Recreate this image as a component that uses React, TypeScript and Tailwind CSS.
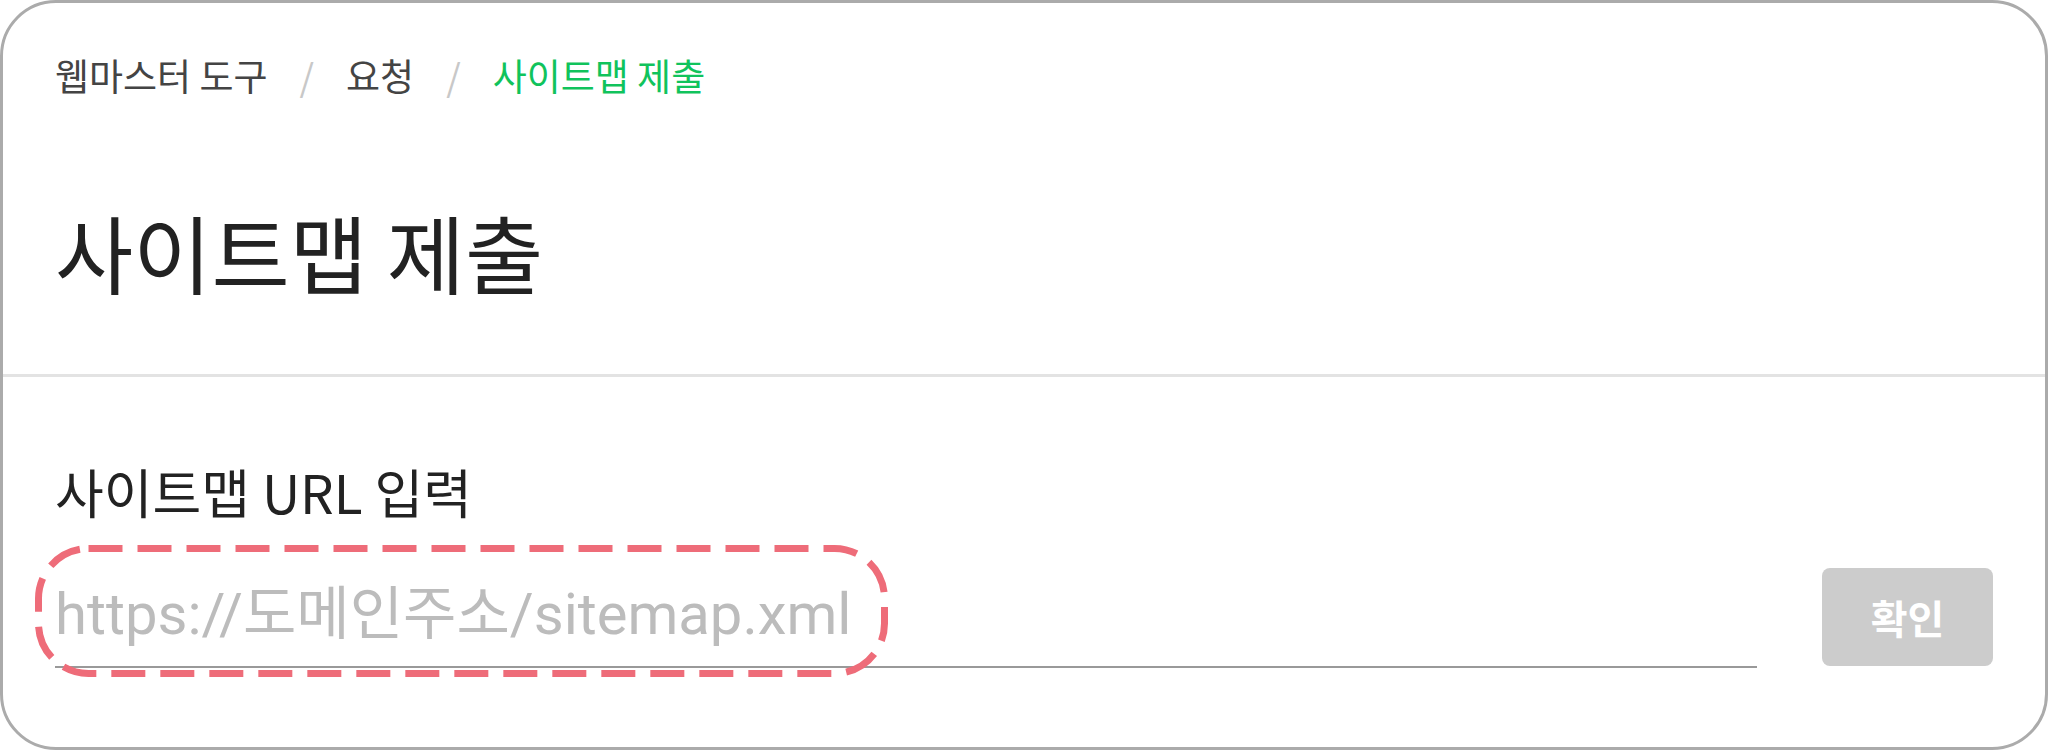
import React from "react";

const KR = { fontFamily: '"Noto Sans CJK KR", "Noto Sans", sans-serif' };

const Breadcrumb = () => {
  const items = ["웹마스터 도구", "요청", "사이트맵 제출"];
  return (
    <nav className="flex items-center text-[37px] leading-[44px] text-[#444]">
      {items.map((item, i) => (
        <React.Fragment key={item}>
          {i > 0 && <span className="mx-[32px] text-[#c8c8c8]">/</span>}
          <span className={i === items.length - 1 ? "text-[#10c35c]" : ""}>{item}</span>
        </React.Fragment>
      ))}
    </nav>
  );
};

export default function App() {
  return (
    <div className="w-full h-[750px] bg-white" style={KR}>
      <div className="h-full rounded-[56px] border-[3px] border-[#ababab] overflow-hidden flex flex-col">
        <div className="px-[52px] pt-[50px]">
          <Breadcrumb />
          <h1 className="mt-[106px] text-[85px] leading-[96px] font-normal text-[#222]">
            사이트맵 제출
          </h1>
        </div>
        <div className="mt-[75px] h-[3px] bg-[#e3e3e3]" />
        <div className="px-[52px] pt-[83px]">
          <label className="block text-[53px] leading-[62px] text-[#222]">사이트맵 URL 입력</label>
          <div className="mt-[46px] flex items-end gap-[65px]">
            <div className="relative flex-1">
              <input
                type="text"
                placeholder="https://도메인주소/sitemap.xml"
                className="w-full h-[95px] pb-[12px] border-b-2 border-[#999] bg-transparent outline-none text-[58px] text-[#333] placeholder:text-[#bcbcbc]"
                style={{ fontFamily: 'Roboto, "Noto Sans CJK KR", sans-serif' }}
              />
              <svg
                className="absolute pointer-events-none left-[-20px] top-[-28px]"
                width="860"
                height="136"
                viewBox="0 0 860 136"
              >
                <rect
                  x="3.5"
                  y="3.5"
                  width="846"
                  height="125"
                  rx="50"
                  fill="none"
                  stroke="#ee6c79"
                  strokeWidth="7"
                  strokeDasharray="34 15"
                />
              </svg>
            </div>
            <button className="w-[171px] h-[98px] rounded-[8px] bg-[#cccccc] text-white text-[40px] font-bold mb-[2px]">
              확인
            </button>
          </div>
        </div>
      </div>
    </div>
  );
}
